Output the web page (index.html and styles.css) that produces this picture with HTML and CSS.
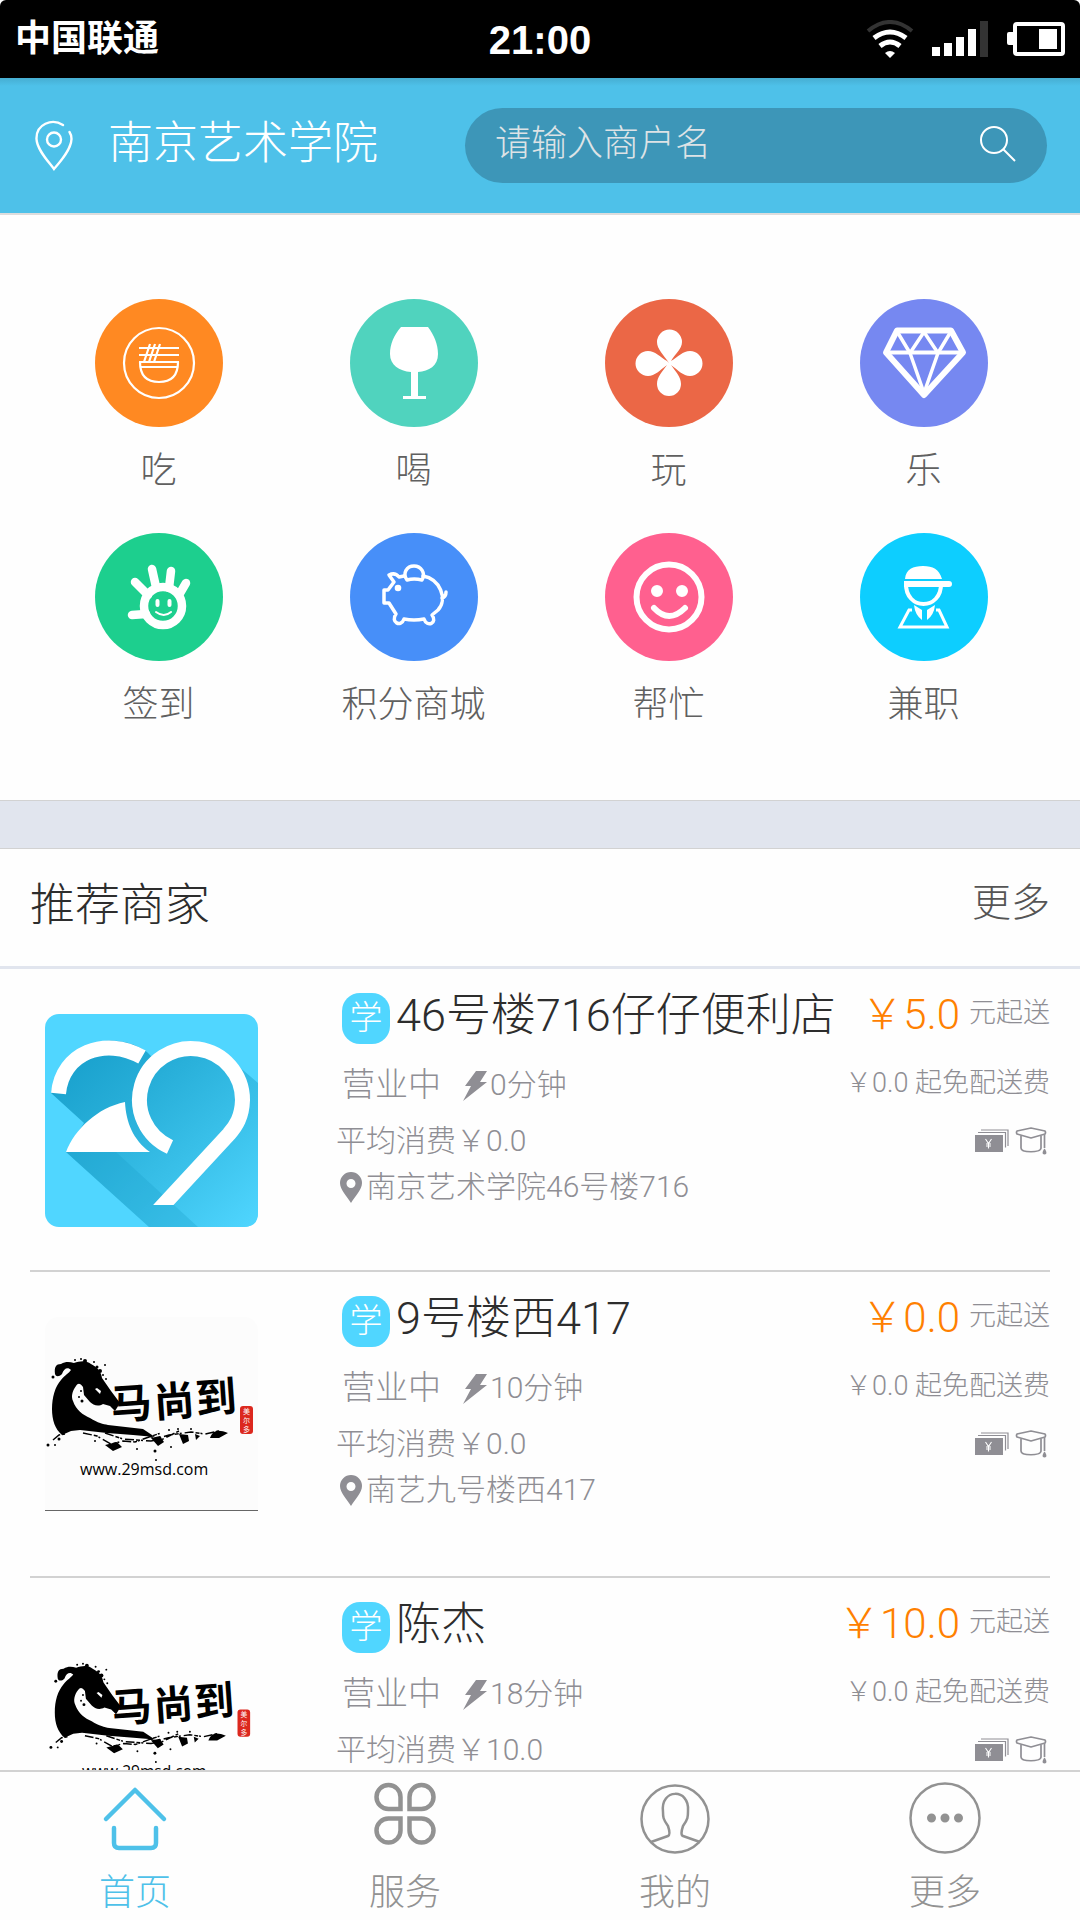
FILE: index.html
```html
<!DOCTYPE html>
<html lang="zh-CN">
<head>
<meta charset="utf-8">
<meta name="viewport" content="width=device-width, initial-scale=1">
<title>首页</title>
<link rel="stylesheet" href="styles.css">
</head>
<body>
<svg class="sprite" aria-hidden="true">
  <symbol id="bolt" viewBox="0 0 25 31"><path fill="currentColor" d="M13 1h11l-7 11h7L0 31l8-15H2z"/></symbol>
  <symbol id="pin" viewBox="0 0 22 31"><path fill="currentColor" fill-rule="evenodd" d="M11 0a11 11 0 0 1 11 11c0 7-7 13-11 20C7 24 0 18 0 11A11 11 0 0 1 11 0zm0 7a4.500 4.500 0 1 0 0 9 4.500 4.500 0 0 0 0-9z"/></symbol>
  <symbol id="cash" viewBox="0 0 34 24"><path fill="currentColor" d="M0 6h28v17H0z"/><path fill="none" stroke="currentColor" stroke-width="1.200" d="M3 3.500h27.500v15M6 1h27v16"/><path fill="none" stroke="#fff" stroke-width="1.100" d="M10.500 10l3 4.500 3-4.500M13.500 14.500v5M11 15h5M11 17h5"/></symbol>
  <symbol id="cap" viewBox="0 0 32 29"><g fill="none" stroke="currentColor" stroke-width="1.700" stroke-linejoin="round"><path d="M2 4l14-3 14 3q1 1.500 0 3l-14 4L2 7q-1-1.500 0-3z"/><path d="M6 8.500V21c0 5 20 5 20 0V8.500M29.500 7.500V21"/></g><path fill="currentColor" d="M29.500 21.500c2 2.500 3 6 0 6s-2-3.500 0-6z"/></symbol>
  <symbol id="ink-logo" viewBox="0 0 213 193">
    <path d="M10 57C9 50 11 47 16 47 21 44 25 45 29 46 35 44 41 43 46 47 52 50 56 54 57 61L66 74 75 86 70 94 65 89 58 87C53 90 48 88 45 85L39 78 38 70C35 66 33 66 31 69 27 74 26 80 28 84 31 93 38 98 45 101 53 106 58 107 63 108L98 112 110 120 88 118 62 116 35 113 26 114 17 118C10 112 7 103 7 92 7 80 10 70 16 63 20 58 24 56 26 53 23 50 19 51 17 57 14 60 11 60 10 57z"/>
    <path fill="#fff" d="M50 72l5 5 1-3-4-3z"/>
    <path fill="none" stroke="#000" stroke-width="1.500" stroke-dasharray="9 2 4 1 2 3" d="M38 116l14 3 14 8 12-3 12 1 14-5 12-4M60 116l18 6 28 2 12-2 16-8M100 116l10 6 14-4 22-3 14 2 14-3M8 123l6-5 6-1"/>
    <path d="M60 128l12-3 5 5-9 4zM165 121c3-8 8-9 18-5l-9 5zM106 121l9-2 4 6-6 4zM134 117l9 1 1 6-6 3zM150 117l5 2-4 4z"/>
    <g><circle cx="3" cy="128" r="1.500"/><circle cx="10" cy="128" r="1"/><circle cx="8" cy="60" r="1.500"/><circle cx="14" cy="122" r="1.500"/><circle cx="30" cy="43" r="1"/><circle cx="36" cy="42" r="1"/><circle cx="40" cy="44" r="2"/><circle cx="49" cy="45" r="1"/><circle cx="52" cy="50" r="1.500"/><circle cx="55" cy="54" r="2"/><circle cx="58" cy="58" r="1"/><circle cx="61" cy="62" r="1"/><circle cx="60" cy="48" r="1"/><circle cx="36" cy="74" r="1"/><circle cx="34" cy="80" r="1"/><circle cx="37" cy="84" r="1.500"/><circle cx="50" cy="124" r="1"/><circle cx="92" cy="132" r="1"/><circle cx="110" cy="134" r="1.500"/><circle cx="126" cy="130" r="1"/><circle cx="111" cy="143" r="1"/><circle cx="124" cy="113" r="1"/><circle cx="146" cy="112" r="1"/><circle cx="133" cy="112" r="1"/></g>
    <g class="brush" transform="rotate(-4 130 90)"><text x="66" y="98">马</text><text x="109" y="99">尚</text><text x="151" y="98">到</text></g>
    <rect x="195" y="89" width="13" height="28" rx="3" fill="#dc281e"/>
    <text class="seal" x="198" y="97">美<tspan x="198" dy="9">尔</tspan><tspan x="198" dy="9">多</tspan></text>
    <text class="site" x="35" y="158">www.29msd.com</text>
  </symbol>
</svg>

<div class="status">
  <span class="carrier">中国联通</span>
  <time class="clock">21:00</time>
  <div class="signals">
    <svg width="48" height="38" viewBox="0 0 48 38" fill="none" stroke="#fff" stroke-width="5"><path stroke="#333" stroke-width="4" d="M2 11Q24-7 46 11"/><path d="M8 18q16-12 32 0M14 26q10-8 20 0"/><path fill="#fff" stroke="none" d="M19 33q5-4 10 0l-5 5z"/></svg>
    <svg width="57" height="36" viewBox="0 0 57 36" fill="#fff"><path d="M0 26h8v9H0zM12 22h8v13h-8zM24 16h8v19h-8zM36 8h8v27h-8z"/><path fill="#333" d="M48 0h8v36h-8z"/></svg>
    <svg width="58" height="34" viewBox="0 0 58 34"><rect x="8" y="2" width="48" height="30" rx="2" fill="none" stroke="#fff" stroke-width="4"/><path fill="#fff" d="M2 10h6v13H2q-2 0-2-2v-9q0-2 2-2zM32 7h18v20H32z"/></svg>
  </div>
</div>

<header class="top">
  <a class="place" href="#place">
    <svg width="38" height="51" viewBox="0 0 38 51" fill="none" stroke="#fff" stroke-width="2.400" stroke-linecap="round"><path d="M28 5C17-2 1 4 1.500 19 2 30 14 42 19 49 25 42 36 30 36.500 19q0-4-2-7"/><circle cx="19" cy="19.500" r="7"/></svg>
    <span>南京艺术学院</span>
  </a>
  <form class="search" role="search">
    <input type="search" placeholder="请输入商户名" aria-label="商户名">
    <button type="button" aria-label="搜索"><svg width="36" height="36" viewBox="0 0 36 36" fill="none" stroke="#fff" stroke-width="2"><circle cx="14" cy="14" r="13"/><path d="M23 23l12 12"/></svg></button>
  </form>
</header>

<main>
  <nav class="services">
    <a href="#eat"><svg viewBox="0 0 128 128"><circle cx="64" cy="64" r="64" fill="#ff8922"/><g fill="none" stroke="#fff" stroke-width="2.200"><circle cx="64" cy="64" r="35"/><path d="M44 49h40M44 56h40M44 63h40M46 68h36M45 63q0 20 19 20t19-20M55 45l-6 18M60 45l-6 18M65 45l-6 18"/></g></svg><span>吃</span></a>
    <a href="#drink"><svg viewBox="0 0 128 128"><circle cx="64" cy="64" r="64" fill="#50d3be"/><path fill="#fff" d="M51 28h27c6 8 10 17 10 27 0 12-9 17-20 18v24h8v3H53v-3h8V73C49 72 40 66 40 55c0-10 4-19 11-27z"/></svg><span>喝</span></a>
    <a href="#play"><svg viewBox="0 0 128 128"><circle cx="64" cy="64" r="64" fill="#eb6746"/><path fill="#fff" d="M64 64C58 55 52 50 52 43a12 12 0 0 1 25 0c0 7-7 12-11 19 7-4 12-10 19-10a12 12 0 0 1 0 25c-7 0-12-6-19-11 5 7 10 12 10 19a12 12 0 0 1-24 0c0-7 5-12 10-19-7 5-12 11-19 11a12 12 0 0 1 0-25c7 0 12 6 19 10z"/></svg><span>玩</span></a>
    <a href="#fun"><svg viewBox="0 0 128 128"><circle cx="64" cy="64" r="64" fill="#7688f1"/><g fill="none" stroke="#fff" stroke-linejoin="round"><path stroke-width="6" d="M37 31.500h54l12 22L64 96 26 53.500z"/><path stroke-width="4" d="M27 53.500h75"/><path stroke-width="3.500" d="M38 34l12 20 14 40 14-40 12-20M50 54l14-21 14 21"/></g></svg><span>乐</span></a>
    <a href="#checkin"><svg viewBox="0 0 128 128"><circle cx="64" cy="64" r="64" fill="#1dcf8e"/><g fill="none" stroke="#fff" stroke-linecap="round"><circle cx="68" cy="73" r="19" stroke-width="8.500"/><path stroke-width="8.500" d="M40 49l13 13M57 36l4 18M76 38l-2 17M91 50l-7 12M37 82l14-1"/><path stroke-width="4" d="M62.500 68v4M74.500 68v4"/><path stroke-width="2" d="M61 79q8 6 15 0"/></g></svg><span>签到</span></a>
    <a href="#mall"><svg viewBox="0 0 128 128"><circle cx="64" cy="64" r="64" fill="#478ff9"/><g fill="none" stroke="#fff" stroke-width="3.500" stroke-linejoin="round" stroke-linecap="round"><path d="M57 47q7-2 15 0c4-7-1-14-8-14s-12 7-7 14z"/><path d="M73 43c17 3 25 23 15 34l-6 5c6 8-5 13-8 4q-10 2-20 0c-3 9-14 3-8-5l-7-11h-5V57h4l6-8-5-7q6-3 10 2l5-1M92 65q4-1 4-6"/></g><circle cx="48" cy="55" r="3.300" fill="#fff"/></svg><span>积分商城</span></a>
    <a href="#help"><svg viewBox="0 0 128 128"><circle cx="64" cy="64" r="64" fill="#ff608f"/><g fill="none" stroke="#fff" stroke-width="6"><circle cx="64" cy="64" r="32.500"/><path stroke-linecap="round" d="M49 75q15 16 31 0"/></g><path fill="#fff" d="M58 58a6 6 0 1 1-12 0 6 6 0 0 1 12 0zM83 58a6 6 0 1 1-12 0 6 6 0 0 1 12 0z"/></svg><span>帮忙</span></a>
    <a href="#job"><svg viewBox="0 0 128 128"><circle cx="64" cy="64" r="64" fill="#0dceff"/><path fill="#fff" d="M45 46c1-10 8-13 18-13s16 3 19 13zM44 48h45q3 0 3 3t-3 3H44zM54 72l8 5v10q-7-5-8-15zM75 72l-8 5v10q7-5 8-15z"/><g fill="none" stroke="#fff"><path stroke-width="4" d="M46 50c-1 28 36 28 35 0"/><path stroke-width="3" d="M52 77h-3L40 94h47l-8-17h-3"/></g></svg><span>兼职</span></a>
  </nav>

  <section class="recommend">
    <div class="heading"><h2>推荐商家</h2><a href="#more">更多</a></div>
    <ul class="shops">
      <li class="shop">
        <div class="thumb">
          <svg viewBox="0 0 213 213">
            <defs>
              <linearGradient id="shade" x1="0" y1="0" x2="1" y2="1"><stop offset="0" stop-color="#149cc9"/><stop offset=".35" stop-color="#27aed8"/><stop offset=".65" stop-color="#39c0e9"/><stop offset="1" stop-color="#50d6ff"/></linearGradient>
              <clipPath id="foot"><path d="M0 0h213v191H0z"/></clipPath>
            </defs>
            <rect width="213" height="213" rx="14" fill="#50d6ff"/>
            <path fill="url(#shade)" d="M6 79A61 61 0 0 1 102 38l5 5A59 59 0 0 1 192 51l21 18v130q0 14-14 14h-95L21 138l18-29z"/>
            <path fill="#1c9fca" fill-opacity=".3" d="M21 138h50l82 75h-49z"/>
            <path fill="#fff" d="M21 138C30 115 52 94 80 88c1 20 8 38 25 50z"/>
            <g fill="none" stroke="#fff" stroke-width="15" clip-path="url(#foot)"><path d="M13.500 79.500C17 39 60 22 97 43"/><path d="M125 133A51.500 51.500 0 1 1 197.500 86C197 103 191 112 184 120L110 200"/></g>
          </svg>
        </div>
        <div class="info">
          <div class="row name"><span class="badge">学</span><h3>46号楼716仔仔便利店</h3><p class="price"><b>￥5.0</b>元起送</p></div>
          <div class="row state"><span class="open">营业中</span><svg class="bolt"><use href="#bolt"/></svg><span>0分钟</span><p class="fee">￥0.0 起免配送费</p></div>
          <div class="row spend"><span>平均消费￥0.0</span><div class="tags"><svg width="34" height="24"><use href="#cash"/></svg><svg width="32" height="29"><use href="#cap"/></svg></div></div>
          <div class="row address"><svg width="22" height="31"><use href="#pin"/></svg><span>南京艺术学院46号楼716</span></div>
        </div>
      </li>
      <li class="shop">
        <div class="thumb lined"><svg viewBox="0 0 213 193"><use href="#ink-logo"/></svg></div>
        <div class="info">
          <div class="row name"><span class="badge">学</span><h3>9号楼西417</h3><p class="price"><b>￥0.0</b>元起送</p></div>
          <div class="row state"><span class="open">营业中</span><svg class="bolt"><use href="#bolt"/></svg><span>10分钟</span><p class="fee">￥0.0 起免配送费</p></div>
          <div class="row spend"><span>平均消费￥0.0</span><div class="tags"><svg width="34" height="24"><use href="#cash"/></svg><svg width="32" height="29"><use href="#cap"/></svg></div></div>
          <div class="row address"><svg width="22" height="31"><use href="#pin"/></svg><span>南艺九号楼西417</span></div>
        </div>
      </li>
      <li class="shop">
        <div class="thumb inset"><svg viewBox="0 0 213 193"><use href="#ink-logo"/></svg></div>
        <div class="info">
          <div class="row name"><span class="badge">学</span><h3>陈杰</h3><p class="price"><b>￥10.0</b>元起送</p></div>
          <div class="row state"><span class="open">营业中</span><svg class="bolt"><use href="#bolt"/></svg><span>18分钟</span><p class="fee">￥0.0 起免配送费</p></div>
          <div class="row spend"><span>平均消费￥10.0</span><div class="tags"><svg width="34" height="24"><use href="#cash"/></svg><svg width="32" height="29"><use href="#cap"/></svg></div></div>
        </div>
      </li>
    </ul>
  </section>
</main>

<nav class="tabs">
  <a class="active" href="#home" aria-current="page"><svg viewBox="0 0 72 72" fill="none" stroke="currentColor" stroke-width="4.500" stroke-linecap="round" stroke-linejoin="round"><path d="M7 37L36 8l29 29"/><path d="M15 46v15q0 5 5 5h32q5 0 5-5V46"/></svg><span>首页</span></a>
  <a href="#service"><svg viewBox="0 0 72 72" fill="none" stroke="currentColor" stroke-width="4.500"><path d="M31 27H19.500A12 12 0 1 1 31.500 15v12zM41 27h11.500A12 12 0 1 0 40.500 15v12zM31 36.500H19.500a12 12 0 1 0 12 12v-12zM41 36.500h11.500a12 12 0 1 1-12 12v-12z"/></svg><span>服务</span></a>
  <a href="#me"><svg viewBox="0 0 72 72" fill="none" stroke="currentColor" stroke-width="2.500"><circle cx="36" cy="37" r="33.500"/><path d="M12 60l17-6q3-1 0-10c-5-7-5-9-5-14-3-24 27-24 25-1 0 6 0 8-5 15q-3 9 0 10l17 6"/></svg><span>我的</span></a>
  <a href="#all"><svg viewBox="0 0 72 72" fill="none" stroke="currentColor" stroke-width="2.500"><circle cx="36" cy="36" r="34.500"/><path stroke-width="9" stroke-linecap="round" d="M22.500 36h0M36 36h0M49.500 36h0"/></svg><span>更多</span></a>
</nav>
</body>
</html>
```
FILE: styles.css
```css
* { box-sizing: border-box; }

body {
  margin: 0;
  height: 100vh;
  display: flex;
  flex-direction: column;
  overflow: hidden;
  background: #fefefe;
  color: #929292;
  font-family: Roboto, "Noto Sans CJK SC", sans-serif;
  font-weight: 300;
}

a { color: inherit; text-decoration: none; }
h2, h3, p, ul { margin: 0; padding: 0; font-weight: inherit; }
svg { display: block; flex: none; }
.sprite { position: absolute; width: 0; height: 0; }

.status {
  flex: none;
  display: grid;
  grid-template-columns: 1fr auto 1fr;
  align-items: center;
  height: 78px;
  padding: 0 15px;
  border-radius: 6px 6px 0 0;
  background: #000;
  color: #fff;
}
.carrier { font-size: 36px; font-weight: 700; line-height: 48px; }
.clock { padding-top: 2px; font: 700 40px/48px "Liberation Sans", sans-serif; }
.signals { display: flex; align-items: center; justify-content: flex-end; gap: 18px; }

.top {
  flex: none;
  display: flex;
  align-items: center;
  justify-content: space-between;
  height: 137px;
  padding: 0 33px 0 35px;
  border-bottom: 2px solid #ddd;
  background: linear-gradient(#46aed2, #4ec1e9 8px);
}
.place { display: flex; align-items: center; gap: 35px; color: #fff; font-size: 45px; line-height: 60px; }
.place span { padding-bottom: 4px; }
.search {
  display: flex;
  align-items: center;
  width: 582px;
  height: 75px;
  padding: 0 31px 3px 30px;
  border-radius: 38px;
  background: #3d96b8;
}
.search input {
  flex: 1;
  min-width: 0;
  padding: 0;
  border: 0;
  outline: 0;
  background: none;
  color: #fff;
  font: inherit;
  font-size: 36px;
  line-height: 48px;
  appearance: none;
}
.search input::placeholder { color: #dde3e6; opacity: 1; }
.search button { padding: 0; border: 0; background: none; }

main { flex: 1; min-height: 0; overflow: hidden; }

.services {
  display: grid;
  grid-template-columns: repeat(4, 1fr);
  gap: 36px 0;
  padding: 84px 29px 69px 31px;
}
.services a { display: flex; flex-direction: column; align-items: center; gap: 18px; color: #606060; font-size: 36px; line-height: 52px; }
.services svg { width: 128px; height: 128px; }

.recommend::before {
  content: "";
  display: block;
  height: 47px;
  border: solid #d2d2d2;
  border-width: 1px 0;
  background: #e1e5ee;
}
.heading {
  display: flex;
  justify-content: space-between;
  padding: 27px 30px 30px;
  border-bottom: 3px solid #e1e5ee;
  line-height: 60px;
}
.heading h2 { color: #2d2d2d; font-size: 45px; }
.heading a { color: #555; font-size: 39px; line-height: 54px; }

.shops { list-style: none; }
.shop {
  display: flex;
  gap: 78px;
  min-height: 306px;
  margin: 0 30px;
  padding: 24px 0 20px 15px;
  border-bottom: 2px solid #d2d2d2;
}
.shop:first-child { min-height: 303px; }
.thumb { flex: none; width: 213px; margin-top: 21px; }
.thumb svg { width: 100%; }
.lined { align-self: flex-start; border-bottom: 1px solid #666; border-radius: 14px 14px 0 0; background: #fcfcfc; }
.inset { padding: 0 3px; }
.brush { font: 700 41px "Noto Sans CJK SC", sans-serif; }
.seal { fill: #fff; font: 400 7px "Noto Sans CJK SC", sans-serif; }
.site { font: 400 16px "Open Sans", sans-serif; }

.info { flex: 1; min-width: 0; color: #8f8e94; font-size: 30px; line-height: 40px; }
.row { display: flex; align-items: center; }
.name { align-items: flex-start; height: 46px; padding-left: 6px; line-height: 46px; }
.badge {
  width: 48px;
  height: 51px;
  margin-right: 6px;
  border-radius: 18px;
  background: #50d6ff;
  color: #fff;
  font-size: 33px;
  line-height: 50px;
  text-align: center;
}
.name h3 { color: #2d2d2d; font-size: 45px; white-space: nowrap; }
.price, .fee, .tags { margin-left: auto; font-size: 27px; white-space: nowrap; }
.price { display: flex; gap: 9px; line-height: 40px; }
.price b { color: #ff8000; font-size: 42px; font-weight: inherit; line-height: 44px; }
.state { margin-top: 26px; padding-left: 6px; }
.fee { padding-bottom: 4px; line-height: 36px; }
.open { margin-right: 22px; font-size: 33px; }
.bolt { width: 25px; height: 31px; margin-right: 2px; }
.spend { margin-top: 16px; }
.tags { display: flex; align-items: center; gap: 6px; padding-right: 3px; }
.address { gap: 4px; margin-top: 6px; padding-left: 4px; }

.tabs {
  flex: none;
  display: grid;
  grid-template-columns: repeat(4, 1fr);
  height: 150px;
  padding-top: 10px;
  border-top: 2px solid #d2d2d2;
  background: #fefefe;
}
.tabs a { display: flex; flex-direction: column; align-items: center; gap: 13px; font-size: 36px; line-height: 52px; }
.tabs svg { width: 72px; height: 72px; }
.tabs .active { color: #4ec1e9; }
```
